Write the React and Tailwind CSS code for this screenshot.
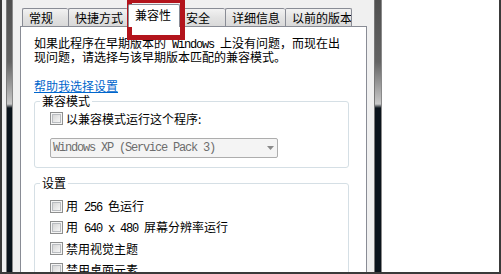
import React from 'react';

// Win7 "兼容性" properties tab, cropped inside a window frame
const Mono = ({ children }) => (
  <span className="font-['Liberation_Mono',monospace] text-[12px] tracking-[-1.2px] whitespace-pre">{children}</span>
);

const CheckBox = () => (
  <div className="w-[13px] h-[13px] shrink-0 border border-[#8e8f8f] bg-[#f4f4f4] p-px">
    <div className="w-full h-full border border-[#b9bcc0] bg-[linear-gradient(135deg,#d6d6d6,#f6f6f6)]" />
  </div>
);

const Row = ({ children }) => (
  <div className="flex items-center h-[13px] gap-[3px] pl-[15px] whitespace-nowrap">
    <CheckBox />
    <span>{children}</span>
  </div>
);

const tabs = [
  { label: '常规', w: 'w-[46px]' },
  { label: '快捷方式', w: 'w-[60px]' },
  { label: '兼容性', w: 'w-[52px]', active: true },
  { label: '安全', w: 'w-[45px]', noLeft: true },
  { label: '详细信息', w: 'w-[60px]' },
  { label: '以前的版本', w: 'w-[67px]', last: true },
];

const frameDark = "bg-[linear-gradient(to_bottom,#505050_0px,#636363_62px,#c9c9c9_104px,#0b141c_108px,#0b141c_100%)]";

const App = () => {
  return (
    <div className="relative w-[501px] h-[274px] overflow-hidden bg-white font-['Noto_Sans_CJK_SC',sans-serif] text-[12px] leading-[12px] text-black">
      <div className="flex h-[272px]">
        <div className="w-[2px] shrink-0 bg-[#3a3a3a]" />
        <div className="w-[4px] shrink-0 bg-[#f0f0f0]" />
        <div className="w-px shrink-0 bg-[#7a7a7a]" />
        <div className={`w-[5px] shrink-0 ${frameDark}`} />
        <div className="w-px shrink-0 bg-[#8a8a8a]" />
        <div className="w-[7px] shrink-0 bg-[#f0f0f0]" />

        {/* dialog */}
        <div className="w-[354px] shrink-0 flex flex-col bg-[#f0f0f0]">
          <div className="h-[26px] shrink-0 flex items-end pl-[2px]">
            {tabs.map((t) =>
              t.active ? (
                <div
                  key={t.label}
                  className={`${t.w} relative z-10 h-[23px] -mb-px bg-white border-x border-t border-[#898c95] rounded-t-[2px] pl-[6px] pt-[4px] whitespace-nowrap`}
                >
                  {t.label}
                </div>
              ) : (
                <div
                  key={t.label}
                  className={`${t.w} h-[18px] bg-[linear-gradient(to_bottom,#f2f2f2,#e3e3e3_50%,#d9d9d9)] border-t border-[#898c95] ${t.noLeft ? '' : 'border-l'} ${t.last ? 'border-r' : ''} rounded-t-[2px] pl-[6px] pt-[3px] whitespace-nowrap overflow-hidden`}
                >
                  {t.label}
                </div>
              )
            )}
          </div>

          <div className="flex-1 min-h-0 w-[347px] overflow-hidden bg-white border-x border-t border-[#898c95] pl-[13px] pr-[17px] pt-[10px]">
            <p className="whitespace-nowrap">
              如果此程序在早期版本的<Mono> Windows </Mono>上没有问题，而现在出
              <br />
              现问题，请选择与该早期版本匹配的兼容模式。
            </p>

            <a href="#" className="block mt-[17px] w-fit text-[#0066cc] underline underline-offset-[1px]">
              帮助我选择设置
            </a>

            <fieldset className="mt-[3px] border border-[#d5dfe5] rounded-[3px] pb-[9px]">
              <legend className="ml-[5px] px-[2px] leading-[12px]">兼容模式</legend>
              <div className="mt-[5px]">
                <Row>以兼容模式运行这个程序:</Row>
              </div>
              <div className="mt-[13px] ml-[15px] w-[228px] h-[20px] flex items-center justify-between border border-[#adadad] rounded-[2px] bg-[#f4f4f4] pl-[2px] pr-[3px] text-[#6d6d6d]">
                <Mono>Windows XP (Service Pack 3)</Mono>
                <svg width="7" height="4" viewBox="0 0 7 4">
                  <polygon points="0,0 7,0 3.5,4" fill="#8a8a8a" />
                </svg>
              </div>
            </fieldset>

            <fieldset className="mt-[9px] h-[140px] border border-[#d5dfe5] rounded-[3px]">
              <legend className="ml-[5px] px-[2px] leading-[12px]">设置</legend>
              <div className="mt-[11px] flex flex-col gap-[8px]">
                <Row>
                  用<Mono> 256 </Mono>色运行
                </Row>
                <Row>
                  用<Mono> 640 x 480 </Mono>屏幕分辨率运行
                </Row>
                <Row>禁用视觉主题</Row>
                <Row>禁用桌面元素</Row>
              </div>
            </fieldset>
          </div>
        </div>

        <div className="w-px shrink-0 bg-[#777777]" />
        <div className={`w-[6px] shrink-0 ${frameDark}`} />
        <div className="w-px shrink-0 bg-[#8a8a8a]" />
        <div className="flex-1 bg-white" />
        <div className="w-[2px] shrink-0 bg-[#3a3a3a]" />
      </div>
      <div className="h-[2px] bg-[#3a3a3a]" />

      {/* red highlight around the active tab */}
      <div className="absolute left-[127px] top-[-2px] w-[58px] h-[42px] border-[5px] border-[#b3141c]" />
    </div>
  );
};

export default App;
